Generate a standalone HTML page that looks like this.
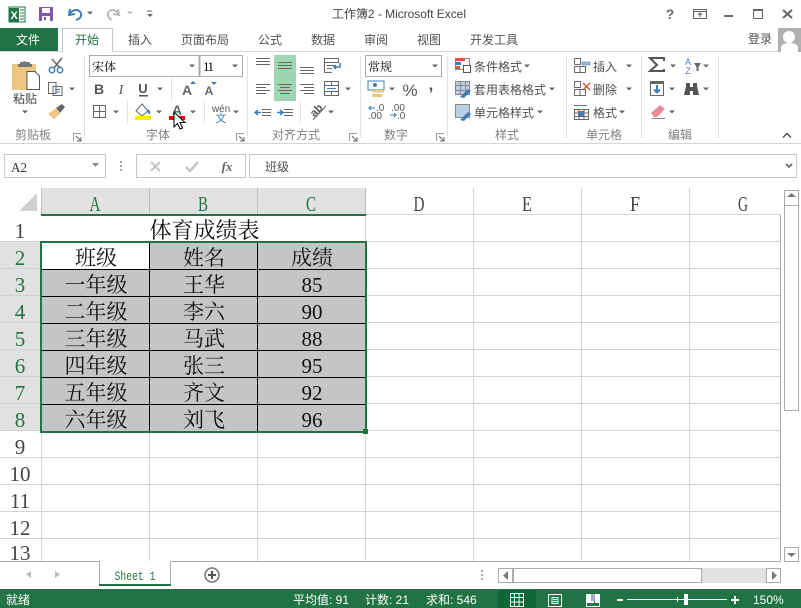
<!DOCTYPE html>
<html><head><meta charset="utf-8"><style>
html,body{margin:0;padding:0;background:#fff;width:801px;height:608px;overflow:hidden}
svg{display:block}
text{font-family:"Liberation Sans","Noto Sans CJK SC",sans-serif;font-size:12px;fill:#505050}
.s{font-family:"Liberation Serif","Noto Serif CJK SC",serif;font-size:21px;fill:#111;text-anchor:middle}
.h{font-family:"Liberation Serif","Noto Serif CJK SC",serif;font-size:21px;fill:#444;text-anchor:middle}
.g{fill:#217346}
.m{text-anchor:middle}
.l{fill:#808080;text-anchor:middle}
.w{fill:#fff}
.b{font-family:"Liberation Serif","Noto Serif CJK SC",serif;fill:#000}
</style></head><body>
<svg width="801" height="608" viewBox="0 0 801 608" xmlns="http://www.w3.org/2000/svg">
<defs>
<path id="dd" d="M-3 -1.500H3L0 1.500Z" fill="#666"/>
<g id="launch"><path d="M.5 .5H8M.5 .5V8" stroke="#999" fill="none"/><path d="M3 3L8 8M8 4V8H4" stroke="#666" fill="none"/></g>
</defs>
<rect width="801" height="608" fill="#fff"/>

<!-- title bar -->
<rect x="9" y="7" width="16" height="15" fill="#fff" stroke="#217346"/>
<rect x="9" y="8" width="10" height="14" fill="#217346"/>
<text x="10.500" y="19" style="font-size:11px;font-weight:bold;fill:#fff">X</text>
<path d="M20 10H24M20 13H24M20 16H24M20 19H24" stroke="#217346"/>
<path d="M39 7H53V21H39Z" fill="#8157a8"/><rect x="42" y="8" width="8" height="5" fill="#fff"/><rect x="42" y="16" width="8" height="5" fill="#fff"/><rect x="44" y="17" width="2" height="3" fill="#8157a8"/>
<path d="M70 9L69 15L75 14M69.500 14C73 8 82 9 81 16C80.500 18 79 19 76 20" fill="none" stroke="#3f7cb8" stroke-width="2"/>
<use href="#dd" x="90" y="13"/>
<path d="M118 9L119 15L113 14M118.500 14C115 8 107 9 108 16C108.500 18 110 19 112 20" fill="none" stroke="#bbb" stroke-width="2"/>
<path d="M127 11.500H133L130 14.500Z" fill="#bbb"/>
<path d="M147 11H152" stroke="#666"/><path d="M147 14H153L150 17Z" fill="#666"/>
<text x="399" y="18" class="m" style="fill:#444" textLength="134">工作簿2 - Microsoft Excel</text>
<text x="670" y="19" class="m" style="font-size:14px;font-weight:bold;fill:#666">?</text>
<path d="M693.500 9.500H706.500V18.500H693.500Z M693.500 11.500H706.500" fill="none" stroke="#666"/><path d="M700 17V13M698 15L700 13L702 15" fill="none" stroke="#666"/>
<rect x="724" y="15" width="9" height="2" fill="#666"/>
<path d="M753.500 9.500H762.500V18.500H753.500Z" fill="none" stroke="#666"/><rect x="753" y="9" width="10" height="2" fill="#666"/>
<path d="M783 10L792 18M792 10L783 18" stroke="#666" stroke-width="2"/>

<!-- tabs -->
<rect x="0" y="28" width="58" height="24" fill="#217346"/>
<text x="28" y="44" class="m w">文件</text>
<path d="M62.500 52V28.500H112.500V52" fill="#fff" stroke="#c6c6c6"/>
<path d="M0 51.500H62M112 51.500H801" stroke="#d4d4d4"/>
<text x="87" y="44" class="m g">开始</text>
<text x="140" y="44" class="m">插入</text>
<text x="205" y="44" class="m">页面布局</text>
<text x="270" y="44" class="m">公式</text>
<text x="323" y="44" class="m">数据</text>
<text x="376" y="44" class="m">审阅</text>
<text x="429" y="44" class="m">视图</text>
<text x="494" y="44" class="m">开发工具</text>
<text x="760" y="43" class="m">登录</text>
<rect x="778" y="28" width="23" height="24" fill="#b0b0b0"/>
<circle cx="789" cy="37" r="6" fill="#fff"/><path d="M781 52V47Q782 43 789 43Q797 43 798 47V52Z" fill="#fff"/>

<!-- ribbon -->
<path d="M0 143.500H801" stroke="#d4d4d4"/>
<path d="M84.500 56V138M247.500 56V138M360.500 56V138M447.500 56V138M566.500 56V138M641.500 56V138M718.500 56V138" stroke="#e1e1e1"/>
<text x="33" y="139" class="l">剪贴板</text>
<text x="158" y="139" class="l">字体</text>
<text x="296" y="139" class="l">对齐方式</text>
<text x="396" y="139" class="l">数字</text>
<text x="507" y="139" class="l">样式</text>
<text x="604" y="139" class="l">单元格</text>
<text x="680" y="139" class="l">编辑</text>
<use href="#launch" x="73" y="133"/><use href="#launch" x="236" y="133"/><use href="#launch" x="349" y="133"/><use href="#launch" x="436" y="133"/>
<path d="M783 137.500L787 133.500L791 137.500" fill="none" stroke="#555" stroke-width="1.500"/>

<!-- clipboard -->
<path d="M12 64H36V90H12Z" fill="#ecc682"/>
<path d="M20 64V62H23Q24 60 26 62H30V64H32V67H18V64Z" fill="#777"/>
<path d="M27 71.500H35L39.500 76V89.500H27Z" fill="#fff" stroke="#555"/>
<text x="25" y="103" class="m" style="fill:#444">粘贴</text>
<use href="#dd" x="25" y="112"/>
<path d="M52 59L60 68M62 58L54 68" stroke="#666" stroke-width="1.500"/>
<circle cx="52" cy="70" r="2.700" fill="none" stroke="#3f7cb8" stroke-width="1.500"/><circle cx="60" cy="70" r="2.700" fill="none" stroke="#3f7cb8" stroke-width="1.500"/>
<path d="M48.500 82.500H56V93.500H48.500Z M53 86.500H62V95.500H53Z" fill="#fff" stroke="#666"/><path d="M55 89.500H60M55 92H60" stroke="#3f7cb8"/>
<use href="#dd" x="72" y="89"/>
<path d="M48 114L56 108L60 114L54 119Z" fill="#ecc682"/><path d="M56 108L62 104L65 107L60 113Z" fill="#666"/>

<!-- font -->
<rect x="89.500" y="55.500" width="153" height="21" fill="#fff" stroke="#ababab"/>
<path d="M199.500 55V77" stroke="#ababab" stroke-width="2"/>
<text x="92" y="71" class="b">宋体</text>
<text x="203" y="71" class="b" style="font-size:13px" textLength="11">11</text>
<use href="#dd" x="192" y="66"/><use href="#dd" x="235" y="66"/>
<text x="99" y="94" class="m" style="font-size:14px;font-weight:bold;fill:#555">B</text>
<text x="121" y="94" class="m" style="font-size:14px;font-style:italic;font-family:'Liberation Serif',serif;fill:#555">I</text>
<text x="143" y="93" class="m" style="font-size:13px;font-weight:bold;fill:#555">U</text>
<rect x="139" y="95" width="9" height="1.500" fill="#555"/>
<use href="#dd" x="160" y="89"/>
<path d="M171.500 78V100M127.500 101V123M204.500 101V123" stroke="#e1e1e1"/>
<text x="187" y="95" class="m" style="font-size:14px;font-weight:bold;fill:#666">A</text><path d="M190 84H196L193 81Z" fill="#3f7cb8"/>
<text x="209" y="95" class="m" style="font-size:12px;font-weight:bold;fill:#666">A</text><path d="M211 82H217L214 85Z" fill="#3f7cb8"/>
<path d="M93.500 105.500H105.500V117.500H93.500ZM99.500 105.500V117.500M93.500 111.500H105.500" fill="none" stroke="#666"/>
<use href="#dd" x="116" y="112"/>
<path d="M136 111L142 104L148 111L142 116Z" fill="#fff" stroke="#666"/><path d="M148 109Q151 111 150 114Q147 114 148 109Z" fill="#3f7cb8"/>
<rect x="135" y="116" width="16" height="4" fill="#ffee00"/>
<use href="#dd" x="159" y="112"/>
<text x="177" y="115" class="m" style="font-size:14px;font-weight:bold;fill:#666">A</text>
<rect x="169" y="116" width="16" height="4" fill="#f00"/>
<path d="M174 112V127L177.500 123.500L180 129L182.500 128L180 122.500H185Z" fill="#fff" stroke="#000"/>
<use href="#dd" x="193" y="112"/>
<text x="221" y="112" class="m" style="font-size:10px;fill:#555">wén</text>
<text x="221" y="122" class="m" style="font-size:11px;fill:#3f7cb8">文</text>
<use href="#dd" x="236" y="112"/>

<!-- alignment -->
<rect x="274" y="55" width="22" height="46" fill="#a0d5b2"/>
<path d="M256 58.500H270M256 61.500H270M256 64.500H270M278 62.500H292M278 65.500H292M278 68.500H292M300 67.500H314M300 70.500H314M300 73.500H314" stroke="#666"/>
<path d="M256 84.500H270M256 87.500H266M256 90.500H270M256 93.500H266M278 84.500H292M280 87.500H290M278 90.500H292M280 93.500H290M300 84.500H314M304 87.500H314M300 90.500H314M304 93.500H314" stroke="#666"/>
<path d="M324.500 58.500H338.500V62.500H324.500ZM324.500 62.500V72.500H332M327 65.500H334M327 68.500H332" fill="none" stroke="#666"/><path d="M340 63V67H334M336 65L334 67L336 69" fill="none" stroke="#3f7cb8" stroke-width="1.500"/>
<path d="M324.500 81.500H338.500V95.500H324.500ZM324.500 85.500H338.500M324.500 91.500H338.500M331.500 81.500V85.500M331.500 91.500V95.500" fill="none" stroke="#666"/><path d="M327 88.500H336" stroke="#3f7cb8"/>
<use href="#dd" x="348" y="89"/>
<path d="M262 109.500H271M262 112.500H271M262 115.500H271" fill="none" stroke="#666"/><path d="M255 112.500H261M258 110L255 112.500L258 115" fill="none" stroke="#3f7cb8" stroke-width="1.500"/>
<path d="M284 109.500H293M284 112.500H293M284 115.500H293" stroke="#666"/><path d="M277 112.500H283M280 110L283 112.500L280 115" fill="none" stroke="#3f7cb8" stroke-width="1.500"/>
<path d="M300.500 101V123" stroke="#e1e1e1"/>
<path d="M313 120L326 106" stroke="#666"/><text x="316" y="114" class="m" transform="rotate(-45 316 110)" style="font-size:11px;fill:#555;font-weight:bold">ab</text>
<use href="#dd" x="331" y="112"/>

<!-- number -->
<rect x="365.500" y="55.500" width="76" height="21" fill="#fff" stroke="#ababab"/>
<text x="368" y="71" class="b">常规</text>
<use href="#dd" x="435" y="66"/>
<rect x="368" y="81" width="16" height="9" fill="#fff" stroke="#3f7cb8"/><circle cx="375" cy="85" r="2" fill="#3f7cb8"/>
<rect x="372" y="90" width="12" height="2.500" fill="#ecc682"/><rect x="372" y="94" width="10" height="3" fill="#ecc682"/>
<use href="#dd" x="392" y="89"/>
<text x="410" y="96" class="m" style="font-size:17px;fill:#555">%</text>
<text x="431" y="90" class="m" style="font-size:17px;font-weight:bold;fill:#555">,</text>
<path d="M369 108H375M371 106L369 108L371 110" fill="none" stroke="#3f7cb8"/>
<text x="376" y="111" style="font-size:10px;fill:#555">.0</text>
<text x="375" y="119" class="m" style="font-size:10px;fill:#555">.00</text>
<text x="398" y="111" class="m" style="font-size:10px;fill:#555">.00</text>
<path d="M390 115H396M394 113L396 115L394 117" fill="none" stroke="#3f7cb8"/>
<text x="397" y="119" style="font-size:10px;fill:#555">.0</text>

<!-- styles -->
<rect x="455.500" y="58.500" width="14" height="11" fill="#fff" stroke="#888"/>
<rect x="455" y="58" width="10" height="3" fill="#d25c3f"/><rect x="455" y="62" width="6" height="3" fill="#3f7cb8"/><rect x="455" y="66" width="5" height="3" fill="#d25c3f"/>
<rect x="463.500" y="65.500" width="7" height="7" fill="#fff" stroke="#555"/>
<text x="474" y="71">条件格式</text><use href="#dd" x="527" y="66"/>
<rect x="455.500" y="81.500" width="14" height="13" fill="#bcd0e4" stroke="#888"/><path d="M455 85.500H470M455 90.500H470M460.500 81V95M465.500 81V95" stroke="#888"/>
<path d="M460 97L468 89L471 91L464 98Z" fill="#3f7cb8"/>
<text x="474" y="94">套用表格格式</text><use href="#dd" x="552" y="89"/>
<rect x="455.500" y="104.500" width="14" height="13" fill="#bcd0e4" stroke="#888"/>
<path d="M460 120L468 112L471 114L464 121Z" fill="#3f7cb8"/>
<text x="474" y="117">单元格样式</text><use href="#dd" x="540" y="112"/>

<!-- cells -->
<path d="M574.500 58.500H580.500V64.500M574.500 64.500H580.500M574.500 66.500H585.500V72.500M574.500 72.500V66.500M574.500 72.500H585.500M580 66.500V72.500M574.500 58.500V64.500" fill="none" stroke="#666"/>
<rect x="582" y="62" width="8" height="3" fill="#a0bcd8" stroke="#3f7cb8" stroke-width=".5"/>
<text x="593" y="71">插入</text><use href="#dd" x="629" y="66"/>
<path d="M574.500 81.500H580.500V87.500H574.500ZM574.500 89.500H585.500V95.500H574.500ZM580 89.500V95.500" fill="none" stroke="#666"/>
<path d="M583 83L590 90M590 83L583 90" stroke="#d25c3f" stroke-width="1.500"/>
<text x="593" y="94">删除</text><use href="#dd" x="629" y="89"/>
<path d="M574.500 109.500H588.500V119.500H574.500ZM574.500 113H588.500M574.500 116.500H588.500M579 109.500V119.500M584 109.500V119.500" fill="none" stroke="#666"/>
<path d="M574 105.500H587" stroke="#3f7cb8"/><rect x="578" y="111" width="6" height="5" fill="#3f7cb8"/>
<text x="593" y="117">格式</text><use href="#dd" x="622" y="112"/>

<!-- editing -->
<path d="M664 61V58H650L657 65L650 71H664V69" fill="none" stroke="#555" stroke-width="2"/>
<use href="#dd" x="673" y="66"/>
<text x="688" y="65" class="m" style="font-size:9px;fill:#3f7cb8">A</text>
<text x="688" y="74" class="m" style="font-size:9px;fill:#8a5ea8">Z</text>
<path d="M694 63H701L698.500 67V71H696.500V67Z" fill="#666"/>
<use href="#dd" x="706" y="66"/>
<rect x="650.500" y="81.500" width="13" height="14" fill="#fff" stroke="#666"/><rect x="650" y="81" width="14" height="3" fill="#666"/>
<path d="M657 85V92M654 89.500L657 92.500L660 89.500" fill="none" stroke="#3f7cb8" stroke-width="2"/>
<use href="#dd" x="672" y="89"/>
<path d="M684 95L686 86V83H690V95ZM693 95V83H697V86L699 95Z" fill="#555"/><rect x="689" y="87" width="5" height="4" fill="#555"/>
<use href="#dd" x="706" y="89"/>
<path d="M651 113L660 105L665 109L657 117H654Z" fill="#e98a9e"/><path d="M652 118.500H665" stroke="#888"/>
<use href="#dd" x="672" y="112"/>

<!-- formula bar -->
<rect x="0" y="144" width="801" height="44" fill="#fff"/>
<rect x="4.500" y="154.500" width="101" height="23" fill="#fff" stroke="#c6c6c6"/>
<text x="11" y="172" style="fill:#333;font-size:14px;font-family:'Liberation Serif',serif" textLength="16" lengthAdjust="spacingAndGlyphs">A2</text>
<path d="M92 163H99L95.500 167Z" fill="#888"/>
<rect x="120" y="161" width="2" height="2" fill="#aaa"/><rect x="120" y="165" width="2" height="2" fill="#aaa"/><rect x="120" y="169" width="2" height="2" fill="#aaa"/>
<rect x="136.500" y="154.500" width="109" height="23" fill="#fff" stroke="#c6c6c6"/>
<path d="M151 162L160 171M160 162L151 171" stroke="#c6c6c6" stroke-width="2"/>
<path d="M186 167L190 171L198 162" fill="none" stroke="#c6c6c6" stroke-width="2.500"/>
<text x="227" y="171" class="m" style="font-family:'Liberation Serif',serif;font-style:italic;font-size:13px;fill:#666;font-weight:bold">fx</text>
<rect x="249.500" y="154.500" width="547" height="23" fill="#fff" stroke="#c6c6c6"/>
<text x="265" y="171">班级</text>
<path d="M786 164L789 167L792 164" fill="none" stroke="#777" stroke-width="2"/>

<!-- col headers -->
<rect x="0" y="188" width="366" height="27" fill="#e1e1e1"/>
<rect x="0" y="188" width="41" height="27" fill="#fff"/>
<rect x="0" y="215" width="41" height="27" fill="#fff"/>
<rect x="0" y="242" width="41" height="189" fill="#e1e1e1"/>
<path d="M37 193V211H19Z" fill="#d0d0d0"/>
<path d="M41.500 188V561.500M149.500 188V561M257.500 188V561M365.500 188V561M473.500 188V561M581.500 188V561M689.500 188V561M780.500 215V561" stroke="#d4d4d4"/>
<path d="M41.500 188V215M149.500 188V215M257.500 188V215M365.500 188V215" stroke="#bdbdbd"/>
<path d="M41 214.500H781M0 241.500H781M0 268.500H781M0 295.500H781M0 322.500H781M0 349.500H781M0 376.500H781M0 403.500H781M0 430.500H781M0 457.500H781M0 484.500H781M0 511.500H781M0 538.500H781" stroke="#d4d4d4"/>
<path d="M0 561.500H781" stroke="#ababab"/>
<rect x="780" y="215" width="1" height="346" fill="#ababab"/>
<text x="95" y="211" class="h g" textLength="11" lengthAdjust="spacingAndGlyphs">A</text><text x="203" y="211" class="h g" textLength="10" lengthAdjust="spacingAndGlyphs">B</text><text x="311" y="211" class="h g" textLength="10" lengthAdjust="spacingAndGlyphs">C</text>
<text x="419" y="211" class="h" textLength="11" lengthAdjust="spacingAndGlyphs">D</text><text x="527" y="211" class="h" textLength="10" lengthAdjust="spacingAndGlyphs">E</text><text x="635" y="211" class="h" textLength="10" lengthAdjust="spacingAndGlyphs">F</text><text x="743" y="211" class="h" textLength="10" lengthAdjust="spacingAndGlyphs">G</text>
<text x="20" y="238" class="h">1</text>
<text x="20" y="265" class="h g">2</text><text x="20" y="292" class="h g">3</text><text x="20" y="319" class="h g">4</text><text x="20" y="346" class="h g">5</text><text x="20" y="373" class="h g">6</text><text x="20" y="400" class="h g">7</text><text x="20" y="427" class="h g">8</text>
<text x="20" y="454" class="h">9</text><text x="20" y="481" class="h">10</text><text x="20" y="508" class="h">11</text><text x="20" y="535" class="h">12</text><text x="20" y="560" class="h">13</text>

<!-- cells data -->
<rect x="41" y="215" width="324" height="27" fill="#fff"/>
<rect x="41" y="242" width="324" height="189" fill="#c5c5c5"/>
<rect x="41" y="243" width="108" height="26" fill="#fff"/>
<path d="M41 269.500H365M41 296.500H365M41 323.500H365M41 350.500H365M41 377.500H365M41 404.500H365M149.500 242V431M257.500 242V431" stroke="#000"/>
<text x="204.500" y="238" class="s" style="font-size:22px">体育成绩表</text>
<text x="96" y="265" class="s">班级</text><text x="204" y="265" class="s">姓名</text><text x="312" y="265" class="s">成绩</text>
<text x="96" y="292" class="s">一年级</text><text x="204" y="292" class="s">王华</text><text x="312" y="292" class="s">85</text>
<text x="96" y="319" class="s">二年级</text><text x="204" y="319" class="s">李六</text><text x="312" y="319" class="s">90</text>
<text x="96" y="346" class="s">三年级</text><text x="204" y="346" class="s">马武</text><text x="312" y="346" class="s">88</text>
<text x="96" y="373" class="s">四年级</text><text x="204" y="373" class="s">张三</text><text x="312" y="373" class="s">95</text>
<text x="96" y="400" class="s">五年级</text><text x="204" y="400" class="s">齐文</text><text x="312" y="400" class="s">92</text>
<text x="96" y="427" class="s">六年级</text><text x="204" y="427" class="s">刘飞</text><text x="312" y="427" class="s">96</text>
<rect x="41" y="242" width="325" height="190" fill="none" stroke="#217346" stroke-width="2"/>
<rect x="41" y="214" width="325" height="2" fill="#217346"/>
<rect x="363" y="429" width="5" height="5" fill="#217346"/>

<!-- vertical scrollbar -->
<rect x="781" y="188" width="20" height="373" fill="#fff"/>
<rect x="784.500" y="190.500" width="14" height="15" fill="#fff" stroke="#ababab"/>
<path d="M787 197H796L791.500 193Z" fill="#777"/>
<rect x="784.500" y="205.500" width="14" height="205" fill="#fff" stroke="#ababab"/>
<rect x="784.500" y="547.500" width="14" height="14" fill="#fff" stroke="#ababab"/>
<path d="M787 553H796L791.500 557Z" fill="#777"/>

<!-- sheet tabs -->
<rect x="0" y="562" width="801" height="27" fill="#fff"/>
<path d="M31 571V578L26 574.500Z" fill="#bbb"/>
<path d="M55 571V578L60 574.500Z" fill="#bbb"/>
<rect x="99" y="561" width="72" height="24" fill="#fff"/>
<path d="M99.500 561V584M170.500 561V584" stroke="#ababab"/>
<rect x="99" y="584" width="72" height="2" fill="#217346"/>
<text x="135" y="580" class="m g" style="font-family:'Liberation Mono',monospace;font-size:13px" textLength="41" lengthAdjust="spacingAndGlyphs">Sheet 1</text>
<circle cx="212" cy="575" r="7" fill="#fff" stroke="#777" stroke-width="1.500"/><path d="M212 571V579M208 575H216" stroke="#555" stroke-width="2"/>
<rect x="481" y="570" width="2" height="2" fill="#aaa"/><rect x="481" y="574" width="2" height="2" fill="#aaa"/><rect x="481" y="578" width="2" height="2" fill="#aaa"/>
<rect x="513" y="568" width="253" height="15" fill="#e1e1e1"/>
<rect x="498.500" y="568.500" width="14" height="14" fill="#fff" stroke="#ababab"/>
<path d="M508 571V580L503 575.500Z" fill="#777"/>
<rect x="513.500" y="568.500" width="188" height="14" fill="#fff" stroke="#ababab"/>
<rect x="766.500" y="568.500" width="14" height="14" fill="#fff" stroke="#ababab"/>
<path d="M772 571V580L777 575.500Z" fill="#777"/>

<!-- status bar -->
<rect x="0" y="589" width="801" height="19" fill="#217346"/>
<rect x="498" y="590" width="38" height="18" fill="#0f6636"/>
<text x="6" y="604" class="w">就绪</text>
<text x="293" y="604" style="fill:#fff">平均值: 91</text>
<text x="365" y="604" style="fill:#fff">计数: 21</text>
<text x="426" y="604" style="fill:#fff">求和: 546</text>
<path d="M510.500 593.500H523.500V606.500H510.500ZM510.500 597.500H523.500M510.500 602H523.500M514.500 593.500V606.500M519 593.500V606.500" fill="none" stroke="#fff"/>
<path d="M548.500 594.500H561.500V606.500H548.500Z M552 597.500H558V603.500H552Z M553 599.500H557M553 601.500H557" fill="none" stroke="#fff"/>
<path d="M586.500 594.500H599.500V606.500H586.500Z" fill="none" stroke="#fff"/><rect x="586" y="594" width="8" height="9" fill="#fff"/><rect x="591" y="594" width="4" height="7" fill="#aac"/><rect x="595" y="594" width="5" height="9" fill="#fff"/>
<rect x="617" y="599" width="6" height="2" fill="#fff"/>
<rect x="627" y="599" width="100" height="1" fill="#fff"/>
<rect x="677" y="597" width="1" height="5" fill="#fff"/>
<rect x="684" y="594" width="4" height="11" fill="#fff"/>
<path d="M731 600H739M735 596V604" stroke="#fff" stroke-width="2"/>
<text x="753" y="604" style="fill:#fff">150%</text>
</svg>
</body></html>
